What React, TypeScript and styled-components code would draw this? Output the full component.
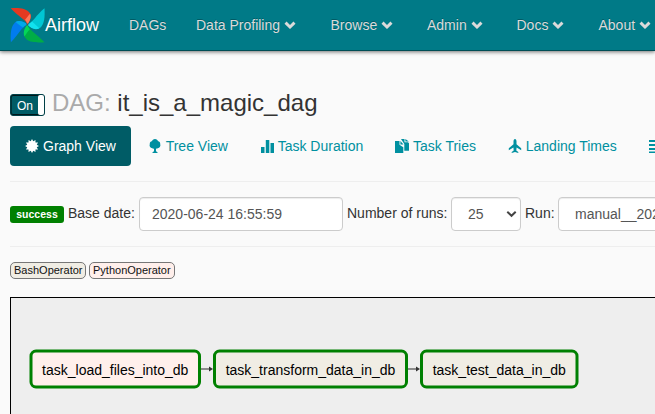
import React from "react";
import styled, { createGlobalStyle } from "styled-components";

const GlobalStyle = createGlobalStyle`
  * { box-sizing: border-box; }
  html, body { margin: 0; height: 100%; overflow: hidden; }
  body {
    background: #fafafa;
    color: #333;
    font: 14px/20px "Liberation Sans", Arial, sans-serif;
  }
`;

const Navbar = styled.nav`
  display: flex;
  align-items: center;
  height: 51px;
  padding-left: 10px;
  background: #007a87;
  border-bottom: 1px solid #004d55;
  box-shadow: 0 1px 4px rgba(0, 0, 0, 0.55);
  white-space: nowrap;
`;

const Brand = styled.a`
  display: flex;
  flex: none;
  align-items: center;
  width: 104px;
  height: 50px;
  color: #fff;
  font-size: 18px;
  text-shadow: 0 -1px 0 rgba(0, 0, 0, 0.25);
`;

const NavItem = styled.a<{ $width?: number }>`
  display: flex;
  flex: none;
  align-items: center;
  width: ${(p) => (p.$width ? `${p.$width}px` : "auto")};
  padding: 0 15px;
  color: #dadada;
  text-shadow: 0 -1px 0 rgba(0, 0, 0, 0.25);
`;

const NavCaret = styled.svg`
  flex: none;
  width: 12px;
  height: 8px;
  margin-left: 4px;
`;

const Page = styled.main`
  width: 900px;
  padding-left: 10px;
`;

const Heading = styled.h3`
  display: flex;
  align-items: center;
  height: 26px;
  margin: 39px 0 0;
  font-size: 24px;
  line-height: 26px;
  font-weight: 400;
  white-space: pre;
`;

const Toggle = styled.span`
  display: flex;
  width: 35px;
  height: 22px;
  margin: 4px 7px 0 0;
  border: 1px solid #003f46;
  border-radius: 3px;
  background: #005c66;
  box-shadow: inset 0 1px 0 #00171a, inset 0 -1px 0 #00171a, inset 1px 0 0 #00343a;
  color: #fff;
  font-size: 12px;
  line-height: 22px;
`;

const ToggleText = styled.span`
  width: 27px;
  padding-left: 6px;
`;

const ToggleKnob = styled.span`
  width: 6px;
  background: #fff;
  border-radius: 2px;
`;

const Muted = styled.span`
  color: #aaa;
`;

const Tabs = styled.div`
  display: flex;
  gap: 2px;
  margin-top: 10px;
`;

const Tab = styled.a<{ $active?: boolean }>`
  display: flex;
  flex: none;
  align-items: center;
  gap: ${(p) => (p.$active ? 4 : 3.75)}px;
  height: 40px;
  padding: 0 15px;
  border-radius: 4px;
  background: ${(p) => (p.$active ? "#005c66" : "transparent")};
  color: ${(p) => (p.$active ? "#fff" : "#0090a0")};
`;

const TabIcon = styled.svg`
  width: 14px;
  height: 14px;
  margin-top: -1px;
  fill: currentColor;
`;

const Rule = styled.hr<{ $top: number }>`
  height: 1px;
  margin: ${(p) => p.$top}px 0 15px;
  border: 0;
  background: #eee;
`;

const Form = styled.form`
  display: flex;
  align-items: center;
  height: 34px;
  white-space: nowrap;
`;

const StatusBadge = styled.span`
  width: 54px;
  height: 17px;
  margin: 1px 4px 0 0;
  border-radius: 3px;
  background: #008000;
  color: #fff;
  font-size: 10.5px;
  font-weight: 700;
  line-height: 17px;
  text-align: center;
`;

const Label = styled.label<{ $width: number }>`
  flex: none;
  width: ${(p) => p.$width}px;
  margin-top: -2px;
`;

const Field = styled.div<{ $width: number; $indent: number; $after?: number }>`
  display: flex;
  flex: none;
  align-items: center;
  justify-content: space-between;
  width: ${(p) => p.$width}px;
  height: 34px;
  margin-right: ${(p) => p.$after ?? 0}px;
  padding: 0 3px 0 ${(p) => p.$indent}px;
  border: 1px solid #ccc;
  border-radius: 4px;
  background: #fff;
  box-shadow: inset 0 1px 1px rgba(0, 0, 0, 0.075);
  color: #555;
`;

const Legend = styled.div`
  display: flex;
  gap: 3px;
`;

const Operator = styled.span<{ $fill: string; $width: number }>`
  width: ${(p) => p.$width}px;
  height: 17px;
  padding-left: 3px;
  border: 1px solid #777;
  border-radius: 5px;
  background: ${(p) => p.$fill};
  color: #111;
  font-size: 11px;
  line-height: 15px;
  white-space: nowrap;
`;

const Canvas = styled.section`
  height: 300px;
  margin-top: 18px;
  border: 1px solid #000;
  background: #eee;
`;

const Graph = styled.svg`
  display: block;
  font: 14px "Liberation Sans", Arial, sans-serif;
`;

const Logo = () => (
  <svg width="35" height="36" viewBox="0 0 35 36">
    <path d="M.7 1.2C9 .6 16 1.2 19.6 5.8 22.2 9 20.5 13 17.4 17.5 15.4 12 8 9.5.7 1.2Z" fill="#e43921" />
    <path d="M34.5 1.2C35 10 34.6 17 30 21c-4 2.5-8 .5-12.6-3.5C23 15.500 26 8 34.500 1.200Z" fill="#00c7d4" />
    <path d="M34.500 35.200C26 35.700 18 35.500 15 30.500c-2.200-4-.8-8 2.400-13C19 23 26 26.500 34.500 35.200Z" fill="#00ad46" />
    <path d="M.9 35.200C.3 27 .8 19.500 5 15.500c4-3 8.500-.7 12.400 2C12 19.500 9 27 .9 35.200Z" fill="#017cee" />
    <path d="M17.400 17.500C17 15.500 16 14 15 12.800 17 10.500 19 7.500 20.100 6.700 21.500 10 20 14 17.400 17.500Z" fill="#ff7557" />
    <path d="M17.400 17.500c2-.6 3.300-1.600 4.600-2.900 2 1.800 5 4.400 7.300 6.700-4 2.200-8 .2-11.900-3.800Z" fill="#11e1ee" />
    <path d="M17.400 17.500c.5 2 1.300 3.400 2.500 4.700-2 2-3.500 4.500-5.400 7.300-1.700-4-.2-8 2.900-12Z" fill="#04d659" />
    <path d="M17.400 17.500c-2 .7-3.200 1.600-4.300 2.900-2-1.300-4.600-2.600-7.500-5.400 4-2.200 8.200-.1 11.800 2.500Z" fill="#00a9e8" />
    <circle cx="17.400" cy="17.500" r="1" fill="#51504f" />
  </svg>
);

const Caret = () => (
  <NavCaret viewBox="0 0 12 8">
    <path d="M1.500 1.600 6 6l4.500-4.400" fill="none" stroke="#dadada" strokeWidth="2.900" />
  </NavCaret>
);

const burst = Array.from({ length: 24 }, (_, i) => {
  const angle = (i * Math.PI) / 12;
  const radius = i % 2 ? 4.9 : 7;
  return `${7 + radius * Math.sin(angle)},${7 - radius * Math.cos(angle)}`;
}).join(" ");

const icons: Record<string, React.ReactNode> = {
  burst: <polygon points={burst} />,
  tree: <path d="M7 0c1.700 0 2.600 1 2.900 2 1.500.3 2.500 1.500 2.300 3 .7 2-.4 4.200-2.500 4.300-.6.500-1.200.4-1.700.2v2.700l1.500 1v.8h-5v-.8l1.500-1V9.500c-.5.3-1.200.3-1.700-.2C2.200 9.200 1 7 1.800 5c-.2-1.500.8-2.700 2.300-3C4.400 1 5.300 0 7 0Z" />,
  chart: <path d="M1 8h3.500v6H1Zm4.800-7H9.300v13H5.800Zm4.700 3H14v10h-3.500Z" />,
  files: (
    <>
      <path d="M0 2h4.500v3.800l3.800 2.500V14H0Z" />
      <path d="M5.400 2 8.500 5.500H5.400ZM6 0h3.500v3.300H13l1 1v7.500H9.300V5Z" />
      <path d="M10.400 0 13.800 2.500h-3.400Z" />
    </>
  ),
  plane: <path d="M7 0c.9 0 1.500 1.200 1.500 2.500v2.800l4.700 4v1.900L8.600 8.600l-.3 2.800 2 1.500V14L7 13.100 3.700 14v-1.100l2-1.500-.3-2.800-4.600 2.600V9.300l4.700-4V2.500C5.500 1.200 6.100 0 7 0Z" />,
  list: <path d="M0 1h14v2H0Zm0 4h14v2H0Zm0 4h14v2H0Zm0 3.500h14v1.500H0Z" />,
};

const tabs = [
  ["burst", "Graph View"],
  ["tree", "Tree View"],
  ["chart", "Task Duration"],
  ["files", "Task Tries"],
  ["plane", "Landing Times"],
  ["list", "Gantt"],
];

const tasks = [
  { name: "task_load_files_into_db", x: 20, width: 168.5, fill: "#ffefeb" },
  { name: "task_transform_data_in_db", x: 203.5, width: 192, fill: "#f0ede4" },
  { name: "task_test_data_in_db", x: 410.5, width: 155.5, fill: "#f0ede4" },
];

export default function App() {
  return (
    <>
      <GlobalStyle />
      <Navbar>
        <Brand><Logo />Airflow</Brand>
        <NavItem $width={67}>DAGs</NavItem>
        <NavItem $width={134.500}>Data Profiling<Caret /></NavItem>
        <NavItem $width={96.500}>Browse<Caret /></NavItem>
        <NavItem $width={89.500}>Admin<Caret /></NavItem>
        <NavItem $width={82}>Docs<Caret /></NavItem>
        <NavItem>About<Caret /></NavItem>
      </Navbar>
      <Page>
        <Heading>
          <Toggle><ToggleText>On</ToggleText><ToggleKnob /></Toggle>
          <Muted>DAG: </Muted>it_is_a_magic_dag
        </Heading>
        <Tabs>
          {tabs.map(([icon, label], i) => (
            <Tab key={label} $active={i === 0}>
              <TabIcon viewBox="0 0 14 14">{icons[icon]}</TabIcon>
              {label}
            </Tab>
          ))}
        </Tabs>
        <Rule $top={15} />
        <Form>
          <StatusBadge>success</StatusBadge>
          <Label $width={71}>Base date:</Label>
          <Field $width={204} $indent={12} $after={4}>2020-06-24 16:55:59</Field>
          <Label $width={104}>Number of runs:</Label>
          <Field $width={70} $indent={16} $after={4}>
            25
            <svg width="11" height="8" viewBox="0 0 11 8">
              <path d="m1.300 1.700 4.200 4.100 4.200-4.100" fill="none" stroke="#444" strokeWidth="2" />
            </svg>
          </Field>
          <Label $width={33}>Run:</Label>
          <Field $width={260} $indent={16}>manual__2020-06-24T16:55:58</Field>
        </Form>
        <Rule $top={15} />
        <Legend>
          <Operator $fill="#f0ede4" $width={76}>BashOperator</Operator>
          <Operator $fill="#ffefeb" $width={86}>PythonOperator</Operator>
        </Legend>
        <Canvas>
          <Graph width="880" height="298">
            {tasks.map((t) => (
              <g key={t.name}>
                <rect x={t.x} y="53" width={t.width} height="36" rx="5" fill={t.fill} stroke="#008000" strokeWidth="3" />
                <text x={t.x + t.width / 2} y="77" textAnchor="middle" fill="#000">{t.name}</text>
              </g>
            ))}
            {[190, 397].map((x) => (
              <g key={x} transform={`translate(${x} 71)`}>
                <path d="M0 0h9" stroke="#555" strokeWidth="1.300" />
                <path d="m8-2.500 4 2.500-4 2.500Z" fill="#333" />
              </g>
            ))}
          </Graph>
        </Canvas>
      </Page>
    </>
  );
}
